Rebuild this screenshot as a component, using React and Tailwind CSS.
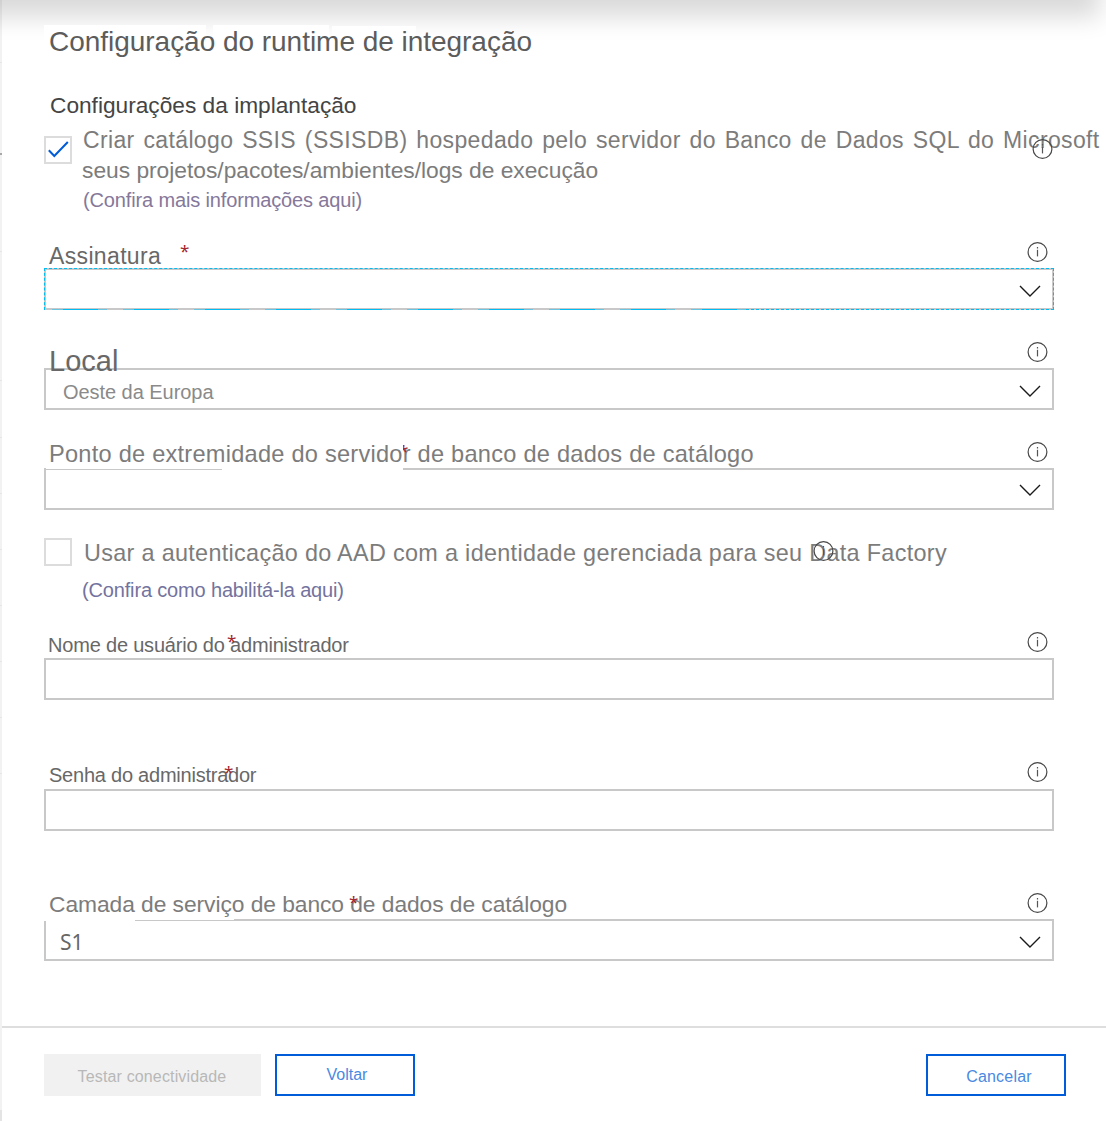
const labelBase = "relative z-10 whitespace-nowrap leading-8";

function InfoIcon({ className = "" }) {
  return (
    <svg className={`h-[22px] w-[22px] shrink-0 ${className}`} viewBox="0 0 22 22" fill="none">
      <circle cx="10.5" cy="11" r="9.4" stroke="#484848" strokeWidth="1.2" />
      <rect x="9.9" y="6" width="1.2" height="1.5" fill="#555" />
      <rect x="9.9" y="8.8" width="1.2" height="6.6" fill="#555" />
    </svg>
  );
}

function Chevron({ className = "" }) {
  return (
    <svg className={`h-3 w-[22px] ${className}`} viewBox="0 0 22 12" fill="none">
      <path d="M1 1 L11 11 L21 1" stroke="#1a1a1a" strokeWidth="1.4" />
    </svg>
  );
}

function Star({ className }) {
  return (
    <span className={`absolute -top-[1px] z-20 font-['Noto_Sans'] text-[17px] leading-8 text-[#a4262c] ${className}`}>*</span>
  );
}

function Checkbox({ checked, className = "" }) {
  return (
    <span className={`flex h-7 w-7 shrink-0 items-center justify-center border-2 border-[#dcdcdc] bg-white ${className}`}>
      {checked && (
        <svg className="h-6 w-6" viewBox="0 0 24 24" fill="none">
          <path d="M2.8 12.2 L8.3 18 L21.8 4" stroke="#015cda" strokeWidth="2" />
        </svg>
      )}
    </span>
  );
}

function Field({ label, labelClass, star, className = "", focused, children, select, chevronClass = "", iconClass = "mt-[5px]" }) {
  return (
    <div className={`w-[1010px] ${className}`}>
      <div className="relative flex h-8 items-start justify-between pl-[5px] pr-[5px]">
        <label className={`${labelBase} ${labelClass}`}>{label}</label>
        <InfoIcon className={iconClass} />
        {star && <Star className={star} />}
      </div>
      <div className="relative flex h-[42px] items-center justify-between border-2 border-[#c8c8c8] pr-[11px]">
        <div className="min-w-0">{children}</div>
        {select && <Chevron className={`mt-1 ${chevronClass}`} />}
        {focused && (
          <>
            <div className="absolute -inset-[2px] border border-b-0 border-dashed border-[#00bcf2]" />
            <div className="absolute -bottom-[2px] left-0 h-px w-[700px] bg-[repeating-linear-gradient(90deg,#c8c8c8_0_6px,#6cc5e0_6px_17px,#00bcf2_17px_52px,#6cc5e0_52px_61px,#c8c8c8_61px_71px)]" />
            <div className="absolute -bottom-[2px] -right-[2px] left-[700px] border-b border-dashed border-[#00bcf2]" />
          </>
        )}
      </div>
    </div>
  );
}

// faint row marks of the page that sits behind the panel
const railMarks = [62, 251, 380, 437, 493, 549, 605, 661, 717, 773];

export default function App() {
  return (
    <div className="relative flex h-[1121px] w-[1106px] overflow-hidden bg-white font-['Liberation_Sans',Arial,sans-serif]">
      <div className="relative w-[2px] shrink-0 bg-[#f2f2f2]">
        {railMarks.map((y) => (
          <span key={y} className="absolute left-0 h-px w-full bg-[#e6e6e6]" style={{ top: y }} />
        ))}
        <span className="absolute left-0 top-[153px] h-[2px] w-full bg-[#a8a8a8]" />
        <span className="absolute bottom-0 left-0 h-[11px] w-full bg-[#e4e4e4]" />
      </div>
      {/* shadow dropped by the bar above the panel */}
      <div className="absolute -left-10 right-[6px] -top-[60px] h-[60px] shadow-[0_17px_25px_rgba(0,0,0,0.15)]" />

      <div className="relative flex w-[1104px] flex-col">
        <main className="flex h-[1026px] flex-col pl-[42px]">
          <div className="relative mt-[25px] h-8">
            <span className="absolute left-0 top-0 h-6 w-[162px] bg-white" />
            <span className="absolute left-[169px] top-0 h-6 w-[116px] bg-white" />
            <span className="absolute left-[288px] top-px h-6 w-[84px] bg-white" />
            <h1 className="relative whitespace-nowrap pl-[5px] pt-px text-[28px] leading-8 tracking-[-0.03px] text-[#5c5c5c]">
              Configuração do runtime de integração
            </h1>
          </div>
          <h2 className="mt-[32px] whitespace-nowrap pl-[6px] text-[22.7px] leading-8 text-[#444]">
            Configurações da implantação
          </h2>

          <div className="relative mt-[4px] flex h-[90px]">
            <Checkbox checked className="mt-[11px]" />
            <div className="ml-[10px] whitespace-nowrap text-[#7c7c7c]">
              <p className="pl-px text-[23px] leading-[30px] tracking-[0.36px] [word-spacing:2.1px]">
                Criar catálogo SSIS (SSISDB) hospedado pelo servidor do Banco de Dados SQL do Microsoft
              </p>
              <p className="text-[22.8px] leading-[30px] tracking-[-0.02px]">seus projetos/pacotes/ambientes/logs de execução</p>
              <a className="block pl-px text-[20px] leading-[30px] tracking-[-0.14px] text-[#85789a]">
                (Confira mais informações aqui)
              </a>
            </div>
            <InfoIcon className="absolute left-[988px] top-[13px]" />
          </div>

          <Field
            label="Assinatura"
            labelClass="mt-1 text-[23px] tracking-[0.35px] text-[#686868]"
            star="left-[136px]"
            className="mt-[21px]"
            focused
            select
          />
          <Field label="Local" labelClass="mt-[9px] text-[29px] text-[#686868]" className="mt-[26px]" select>
            <span className="ml-[17px] mt-[5px] block text-[20px] tracking-[-0.05px] text-[#8a8a8a]">Oeste da Europa</span>
          </Field>
          <div className="relative mt-[26px]">
            <Field
              label="Ponto de extremidade do servidor de banco de dados de catálogo"
              labelClass="mt-[2px] text-[23.6px] tracking-[0.24px] text-[#7c7c7c]"
              star="left-[355px] [clip-path:inset(0_0_0_4px)]"
              select
              chevronClass="-translate-y-px"
            />
            <span className="absolute left-[2px] top-8 h-px w-[176px] bg-white" />
            <span className="absolute left-[178px] top-8 h-[2px] w-[181px] bg-white" />
          </div>

          <div className="relative mt-[25px] flex h-[65px]">
            <Checkbox className="mt-[3px]" />
            <div className="ml-[10px] whitespace-nowrap">
              <p className="pl-[2px] text-[23.4px] leading-9 tracking-[0.32px] text-[#7c7c7c]">
                Usar a autenticação do AAD com a identidade gerenciada para seu Data Factory
              </p>
              <a className="mt-px block text-[20px] leading-9 tracking-[-0.16px] text-[#73739e]">
                (Confira como habilitá-la aqui)
              </a>
            </div>
            <InfoIcon className="absolute left-[769px] top-[5px]" />
          </div>

          <Field
            label="Nome de usuário do administrador"
            labelClass="mt-[3px] -ml-px text-[20px] tracking-[-0.19px] text-[#686868]"
            star="left-[183px]"
            className="mt-[26px]"
          />
          <Field
            label="Senha do administrador"
            labelClass="mt-[2px] text-[20px] tracking-[-0.23px] text-[#686868]"
            star="left-[180px]"
            className="mt-[57px]"
            iconClass="mt-1"
          />
          <div className="relative mt-[56px]">
            <Field
              label="Camada de serviço de banco de dados de catálogo"
              labelClass="mt-px text-[22.8px] tracking-[-0.06px] text-[#7c7c7c]"
              star="left-[305px]"
              select
            >
              <span className="ml-[14px] mt-[5px] block font-['Noto_Sans'] text-[21px] text-[#666]">S1</span>
            </Field>
            <span className="absolute left-0 top-8 h-[2px] w-[91px] bg-white" />
            <span className="absolute left-[91px] top-8 h-px w-[99px] bg-white" />
          </div>
        </main>

        <footer className="flex border-t-2 border-[#dedede] pl-[42px] pr-[40px] pt-[26px] text-[16px]">
          <button className="h-[42px] w-[217px] bg-[#f1f1f1] pr-px pt-1 tracking-[0.15px] text-[#b8b8b8]">
            Testar conectividade
          </button>
          <button className="ml-[14px] h-[42px] w-[140px] border-2 border-[#015cda] pb-px pl-1 text-[#4a89e2]">
            Voltar
          </button>
          <button className="ml-auto h-[42px] w-[140px] border-2 border-[#015cda] pl-[6px] pt-[3px] tracking-[0.2px] text-[#4a89e2]">
            Cancelar
          </button>
        </footer>
      </div>
    </div>
  );
}
